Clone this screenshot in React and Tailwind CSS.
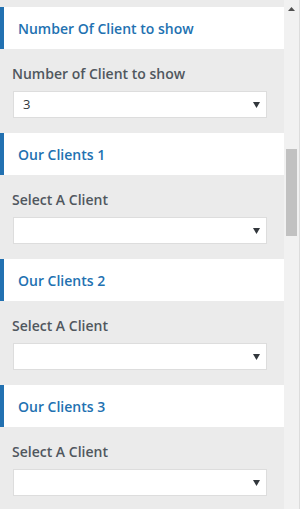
import React from "react";

const panels = [
    { title: "Number Of Client to show", label: "Number of Client to show", value: "3" },
    { title: "Our Clients 1", label: "Select A Client", value: "" },
    { title: "Our Clients 2", label: "Select A Client", value: "" },
    { title: "Our Clients 3", label: "Select A Client", value: "" },
];

function Caret() {
    return (
        <svg width="7" height="6" viewBox="0 0 7 6" className="shrink-0">
            <path d="M0 0 H7 L3.5 6 Z" fill="#32373c" />
        </svg>
    );
}

function Panel({ title, label, value }) {
    return (
        <div>
            <div className="h-[42px] bg-white border-l-4 border-[#2271b1] flex items-center pl-[14px]">
                <h3 className="text-[14px] font-semibold text-[#2271b1]">{title}</h3>
            </div>
            <div className="px-3 pt-[15px] pb-[15px]">
                <label className="block text-[14px] leading-5 font-semibold text-[#50575e]">{label}</label>
                <div className="mt-[7px] ml-px w-[254px] h-[27px] bg-white border border-[#dddddd] flex items-center justify-between pl-[9px] pr-[6px]">
                    <span className="text-[13px] text-[#32373c]">{value}</span>
                    <Caret />
                </div>
            </div>
        </div>
    );
}

export default function App() {
    return (
        <div className="w-[300px] h-[509px] overflow-hidden flex bg-[#ebebeb]" style={{ fontFamily: '"Open Sans", "Noto Sans", sans-serif' }}>
            <div className="w-[284px] pt-[7px]">
                {panels.map((p, i) => (
                    <Panel key={i} {...p} />
                ))}
            </div>
            <div className="w-[16px] flex bg-[#f1f1f1] border-r border-[#dcdcdc]">
                <div className="flex-1 flex flex-col items-center pt-[7px]">
                    <svg width="7" height="4" viewBox="0 0 7 4">
                        <path d="M0 4 L3.5 0 L7 4 Z" fill="#505050" />
                    </svg>
                    <div className="mt-[138px] w-[11px] h-[87px] bg-[#c1c1c1]" />
                </div>
            </div>
        </div>
    );
}
